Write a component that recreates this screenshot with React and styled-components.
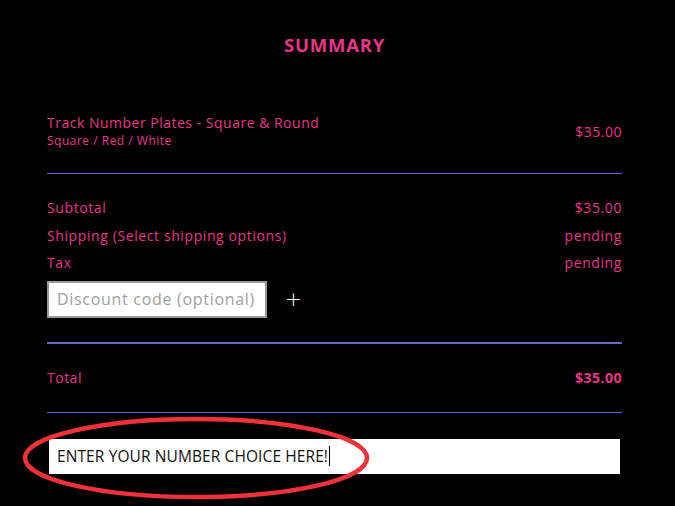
import React from "react";
import styled, { createGlobalStyle } from "styled-components";

const Global = createGlobalStyle`
  html, body { margin: 0; padding: 0; background: #000; }
  body { font-family: "Open Sans", "Noto Sans", sans-serif; }
`;

const PINK = "#e8358a";
const LINE = "#6367c4";

const Page = styled.div`
  width: 675px;
  height: 506px;
  background: #000;
  position: relative;
  overflow: hidden;
  box-sizing: border-box;
  padding: 32px 53px 0 47px;
`;

const Title = styled.h2`
  margin: 0;
  text-align: center;
  color: ${PINK};
  font-size: 18.5px;
  font-weight: 700;
  line-height: 26px;
  letter-spacing: 0.8px;
`;

const ItemRow = styled.div`
  display: flex;
  justify-content: space-between;
  align-items: center;
  margin-top: 56px;
  padding-bottom: 24px;
  border-bottom: 1px solid ${LINE};
`;

const ItemInfo = styled.div`
  display: flex;
  flex-direction: column;
`;

const ItemName = styled.div`
  color: ${PINK};
  font-size: 14px;
  line-height: 18px;
  letter-spacing: 0.5px;
`;

const ItemVariant = styled.div`
  color: ${PINK};
  font-size: 12px;
  line-height: 17px;
  letter-spacing: 0.5px;
`;

const Price = styled.div`
  color: ${PINK};
  font-size: 14px;
  letter-spacing: 0.5px;
  font-weight: ${(p) => (p.$bold ? 700 : 400)};
`;

const Totals = styled.div`
  padding-top: 20px;
  padding-bottom: 24px;
  border-bottom: 2px solid ${LINE};
`;

const Row = styled.div`
  display: flex;
  justify-content: space-between;
  align-items: center;
  height: 27.5px;
  color: ${PINK};
  font-size: 14px;
  letter-spacing: 0.6px;
`;

const DiscountRow = styled.div`
  display: flex;
  align-items: center;
  gap: 12px;
  margin-top: 4px;
`;

const DiscountInput = styled.input`
  box-sizing: border-box;
  width: 220px;
  height: 37px;
  border: 2px solid #9a9a9a;
  background: #fff;
  padding: 0 8px;
  font-family: "Open Sans", sans-serif;
  font-size: 16px;
  letter-spacing: 0.7px;
  outline: none;
  &::placeholder { color: #a0a0a0; }
`;

const PlusButton = styled.button`
  background: none;
  border: none;
  color: #fff;
  font-size: 20px;
  font-weight: 300;
  padding: 0 6px;
  cursor: pointer;
  font-family: "DejaVu Sans", sans-serif;
  line-height: 1;
`;

const TotalRow = styled.div`
  display: flex;
  justify-content: space-between;
  align-items: center;
  height: 68px;
  color: ${PINK};
  font-size: 14px;
  letter-spacing: 0.5px;
  border-bottom: 1px solid ${LINE};
`;

const NoteWrap = styled.div`
  position: relative;
  margin-top: 26px;
  margin-left: 2px;
`;

const NoteField = styled.div`
  background: #fff;
  height: 35px;
  width: 571px;
  display: flex;
  align-items: center;
  padding-left: 8px;
  box-sizing: border-box;
  color: #111;
  font-size: 15.5px;
  letter-spacing: 0.1px;
`;

const Caret = styled.span`
  display: inline-block;
  width: 1px;
  height: 20px;
  background: #000;
  margin-left: 1px;
`;

const Ellipse = styled.svg`
  position: absolute;
  left: -28px;
  top: -24px;
  pointer-events: none;
`;

export default function App() {
  return (
    <>
      <Global />
      <Page>
        <Title>SUMMARY</Title>
        <ItemRow>
          <ItemInfo>
            <ItemName>Track Number Plates - Square &amp; Round</ItemName>
            <ItemVariant>Square / Red / White</ItemVariant>
          </ItemInfo>
          <Price>$35.00</Price>
        </ItemRow>
        <Totals>
          <Row>
            <span>Subtotal</span>
            <span>$35.00</span>
          </Row>
          <Row>
            <span>Shipping (Select shipping options)</span>
            <span>pending</span>
          </Row>
          <Row>
            <span>Tax</span>
            <span>pending</span>
          </Row>
          <DiscountRow>
            <DiscountInput placeholder="Discount code (optional)" />
            <PlusButton>+</PlusButton>
          </DiscountRow>
        </Totals>
        <TotalRow>
          <span>Total</span>
          <Price $bold>$35.00</Price>
        </TotalRow>
        <NoteWrap>
          <NoteField>
            ENTER YOUR NUMBER CHOICE HERE!
            <Caret />
          </NoteField>
          <Ellipse width="354" height="86" viewBox="0 0 354 86">
            <ellipse cx="175" cy="43" rx="171" ry="39" fill="none" stroke="#f0313a" strokeWidth="4.5" />
          </Ellipse>
        </NoteWrap>
      </Page>
    </>
  );
}
